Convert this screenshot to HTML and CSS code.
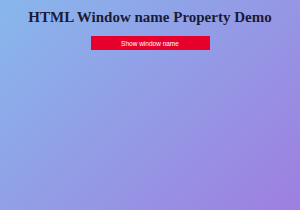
FILE: index.html
```html
<!DOCTYPE html>
<html lang="en">
<head>
    <meta charset="UTF-8">
    <meta name="viewport" content="width=device-width, initial-scale=1.0">
    <title>HTML Window name Property Demo</title>
    <link rel="stylesheet" href="styles.css">
</head>
<body>
    <div class="container">
        <h1 class="title">HTML Window name Property Demo</h1>
        <button class="show-btn" id="showBtn">Show window name</button>
    </div>
</body>
</html>
```

FILE: styles.css
```css
* {
    margin: 0;
    padding: 0;
    box-sizing: border-box;
}

html, body {
    height: 100%;
}

body {
    font-family: 'Liberation Serif', serif;
    background: linear-gradient(135deg, #88b7ec 0%, #9e7fe0 100%);
    color: #1a1b38;
}

.container {
    display: flex;
    flex-direction: column;
    align-items: center;
    padding-top: 7px;
}

.title {
    font-size: 15px;
    font-weight: bold;
    line-height: 20px;
    margin-bottom: 9px;
}

.show-btn {
    width: 119px;
    height: 14px;
    border: none;
    background: #e8002c;
    color: #fff;
    font-family: 'Liberation Sans', sans-serif;
    font-size: 6.5px;
}
```
